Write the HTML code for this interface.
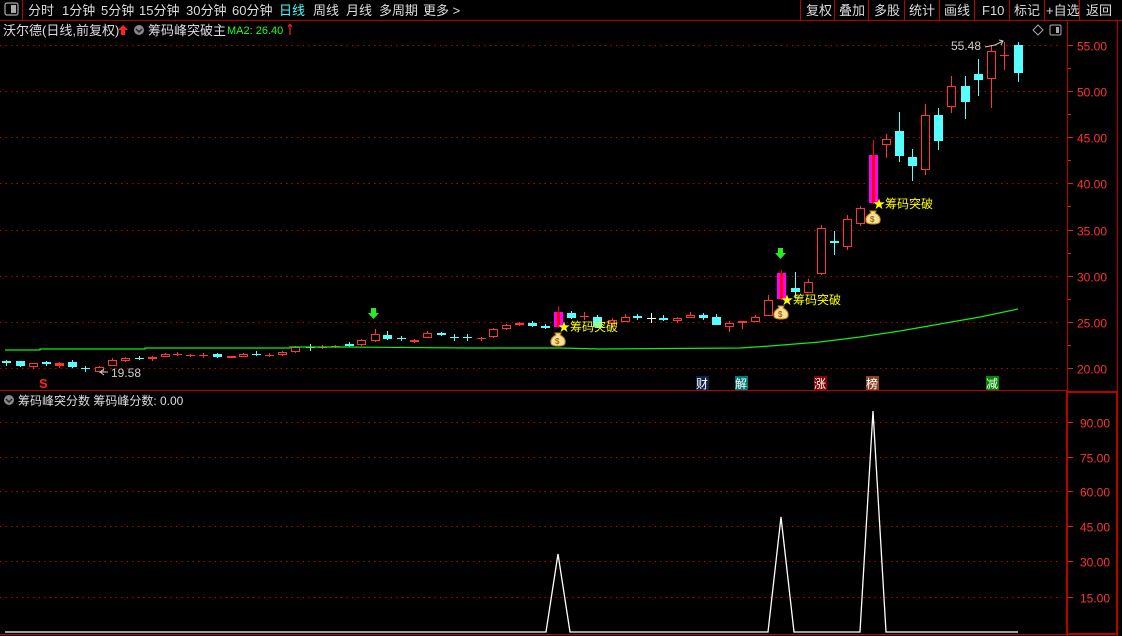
<!DOCTYPE html>
<html><head><meta charset="utf-8"><style>
body{margin:0;background:#000;width:1122px;height:636px;overflow:hidden;font-family:"Liberation Sans","Noto Sans CJK SC",sans-serif;}
svg{position:absolute;left:0;top:0}
text{font-family:"Liberation Sans","Noto Sans CJK SC",sans-serif}
#c,#grid{shape-rendering:crispEdges}
</style></head><body>
<svg id="s" width="1122" height="636" viewBox="0 0 1122 636" xmlns="http://www.w3.org/2000/svg">
<rect width="1122" height="636" fill="#000"/>
<line x1="0" y1="20.5" x2="1122" y2="20.5" stroke="#b00" stroke-width="1"/>
<line x1="22.5" y1="0" x2="22.5" y2="20" stroke="#b00"/>
<rect x="5" y="3" width="13" height="12" rx="2" fill="none" stroke="#aaa" stroke-width="1.2"/>
<rect x="11" y="5" width="5" height="8" fill="#aaa"/>
<g font-size="13" fill="#ddd">
<text x="28" y="15">分时</text><text x="62" y="15">1分钟</text><text x="101" y="15">5分钟</text><text x="139" y="15">15分钟</text><text x="186" y="15">30分钟</text><text x="232" y="15">60分钟</text>
<text x="279" y="15" fill="#4ff">日线</text><text x="313" y="15">周线</text><text x="346" y="15">月线</text><text x="379" y="15">多周期</text><text x="423" y="15">更多 &gt;</text>
</g>
<g stroke="#b00"><line x1="800.5" y1="0" x2="800.5" y2="20"/><line x1="834.5" y1="0" x2="834.5" y2="20"/><line x1="868.5" y1="0" x2="868.5" y2="20"/><line x1="904.5" y1="0" x2="904.5" y2="20"/><line x1="939.5" y1="0" x2="939.5" y2="20"/><line x1="974.5" y1="0" x2="974.5" y2="20"/><line x1="1009.5" y1="0" x2="1009.5" y2="20"/><line x1="1044.5" y1="0" x2="1044.5" y2="20"/><line x1="1079.5" y1="0" x2="1079.5" y2="20"/></g>
<g font-size="13" fill="#ddd"><text x="806" y="15">复权</text><text x="839" y="15">叠加</text><text x="874" y="15">多股</text><text x="909" y="15">统计</text><text x="944" y="15">画线</text><text x="982" y="15">F10</text><text x="1014" y="15">标记</text><text x="1046" y="15">+自选</text><text x="1086" y="15">返回</text></g>
<text x="3" y="35" font-size="13" fill="#ddd">沃尔德(日线,前复权)</text>
<path d="M123 25 L128 30 L125 30 L125 35 L121 35 L121 30 L118 30 Z" fill="#f22"/>
<circle cx="139" cy="30" r="5" fill="#888"/><path d="M136 29 L139 32 L142 29" stroke="#222" stroke-width="1.5" fill="none"/>
<text x="148" y="35" font-size="13" fill="#ddd">筹码峰突破主</text>
<text x="227" y="34" font-size="11" fill="#2f2">MA2: 26.40</text>
<line x1="290" y1="25" x2="290" y2="35" stroke="#f22" stroke-width="1.2"/><path d="M288 27 L290 24 L292 27" stroke="#f22" fill="none"/>
<path d="M1038 25 L1043 30 L1038 35 L1033 30 Z" fill="none" stroke="#aaa"/>
<rect x="1050" y="25" width="11" height="10" rx="1.5" fill="none" stroke="#aaa"/><rect x="1056" y="27" width="3" height="6" fill="#aaa"/>
<line x1="1067.5" y1="21" x2="1067.5" y2="636" stroke="#b00"/>
<line x1="1117.5" y1="21" x2="1117.5" y2="636" stroke="#b00"/>
<line x1="0" y1="390.5" x2="1067" y2="390.5" stroke="#b00"/>
<rect x="1067" y="392" width="50" height="242" fill="none" stroke="#b00" stroke-width="2"/>
<line x1="0" y1="634.5" x2="1067" y2="634.5" stroke="#b00"/>
<g id="grid"></g>
<g id="c"></g>
<path d="M5 350 L40 350 L40 349 L145 349 L145 348 L290 348 L290 347 L345 347 L470 348 L560 348 L600 349 L740 348 L770 346 L820 342 L860 337 L900 331 L940 324 L980 317 L1018 309" stroke="#1e1" stroke-width="1.2" fill="none"/>
<text x="951" y="50" font-size="12" fill="#ccc">55.48</text>
<path d="M985 47 L995 45 L1003 41 M999 40 L1003 41 L1001 45" stroke="#ccc" fill="none"/>
<line x1="101" y1="372" x2="108" y2="372" stroke="#ccc"/><path d="M100 372 L104 369 M100 372 L104 375" stroke="#ccc"/>
<text x="111" y="377" font-size="12" fill="#ccc">19.58</text>
<path d="M371 308 h5 v5 h3 l-5.5 6 l-5.5 -6 h3z" fill="#2e2"/>
<path d="M778 248 h5 v5 h3 l-5.5 6 l-5.5 -6 h3z" fill="#2e2"/>
<g font-size="12" fill="#ff0"><text x="558" y="331">★筹码突破</text><text x="781" y="304">★筹码突破</text><text x="873" y="208">★筹码突破</text></g>
<g id="bags"></g>
<text x="39" y="388" font-size="13" fill="#f22" font-weight="bold">S</text>
<g font-size="12" fill="#fff">
<rect x="696" y="376" width="13" height="14" fill="#124"/><text x="696" y="388">财</text>
<rect x="735" y="376" width="13" height="14" fill="#077"/><text x="735" y="388">解</text>
<rect x="814" y="376" width="13" height="14" fill="#800"/><text x="814" y="388">涨</text>
<rect x="866" y="376" width="13" height="14" fill="#842"/><text x="866" y="388">榜</text>
<rect x="986" y="376" width="13" height="14" fill="#080"/><text x="986" y="388">减</text>
</g>
<circle cx="9" cy="400" r="5" fill="#888"/><path d="M6 399 L9 402 L12 399" stroke="#222" stroke-width="1.5" fill="none"/>
<text x="18" y="405" font-size="12" fill="#ddd">筹码峰突分数  筹码峰分数: 0.00</text>
<path d="M5 632 L546 632 L558 554 L570 632 L768 632 L781 517 L794 632 L860 632 L873 411 L886 632 L1018 632" stroke="#fff" stroke-width="1.3" fill="none"/>
<g id="ax"></g>
</svg>
<script>
var ns="http://www.w3.org/2000/svg";
function el(p,t,a,txt){var e=document.createElementNS(ns,t);for(var k in a)e.setAttribute(k,a[k]);if(txt)e.textContent=txt;document.getElementById(p).appendChild(e);return e;}
var ups=[55,50,45,40,35,30,25,20];
ups.forEach(function(v){var y=45+(55-v)*9.229;y=Math.round(y)+0.5;
el('grid','line',{x1:0,y1:y,x2:1060,y2:y,stroke:'#b00','stroke-dasharray':'1.5 4'});
el('grid','line',{x1:1068,y1:y,x2:1073,y2:y,stroke:'#d22'});
el('ax','text',{x:1077,y:y+5,'font-size':12,fill:'#f33'},v.toFixed(2));
var m=y+23;if(v>20)el('grid','line',{x1:1068,y1:m,x2:1071,y2:m,stroke:'#d22'});});
[[90,422],[75,457],[60,491],[45,526],[30,561],[15,597]].forEach(function(a){var y=a[1]+0.5;
el('grid','line',{x1:0,y1:y,x2:1062,y2:y,stroke:'#b00','stroke-dasharray':'1.5 4'});
el('grid','line',{x1:1068,y1:y,x2:1073,y2:y,stroke:'#d22'});
el('ax','text',{x:1080,y:y+5,'font-size':12,fill:'#f33'},a[0].toFixed(2));});
var C=[[6,361,363,360,366,'c'],[20,361,366,361,367,'c'],[33,363,367,363,369,'r'],[46,362,364,361,366,'c'],[59,363,366,362,368,'R'],[72,362,367,360,368,'c'],[85,368,369,366,372,'c'],[99,367,372,366,373,'r'],
[112,360,366,358,366,'r'],[125,358,361,357,362,'r'],[139,358,359,356,360,'c'],[152,357,359,356,361,'r'],[165,354,357,353,357,'r'],[177,354,355,352,356,'r'],[190,355,356,354,357,'r'],[203,355,356,353,358,'r'],[217,354,357,353,358,'c'],[231,356,358,356,358,'R'],[243,354,357,353,357,'r'],[256,354,355,351,356,'c'],[269,355,356,353,357,'r'],[282,352,355,351,356,'r'],[295,347,352,346,353,'r'],[310,347,348,344,351,'c'],[322,347,348,345,349,'r'],[335,346,347,345,348,'r'],[349,344,346,342,347,'c'],[361,340,345,339,346,'r'],[375,334,341,329,342,'r'],
[387,335,339,331,340,'c'],[401,338,339,336,341,'c'],[414,340,342,339,343,'R'],[427,333,338,331,338,'r'],[441,333,335,332,336,'c'],[454,337,338,334,341,'c'],[467,337,338,334,341,'c'],[481,338,339,337,341,'r'],[493,329,337,328,338,'r'],[506,325,329,324,330,'r'],[519,323,325,322,326,'r'],[532,323,326,321,327,'c'],[545,326,328,324,329,'c'],[558,312,327,306,328,'m'],[571,313,318,311,319,'c'],[584,316,317,312,320,'r'],[597,317,327,315,328,'c'],[612,320,324,318,326,'r'],[625,317,322,314,322,'r'],[637,316,318,314,320,'c'],[651,318,319,313,323,'w'],[663,318,320,315,321,'c'],[677,318,321,317,323,'r'],[690,315,318,312,318,'r'],[703,315,318,313,320,'c'],[716,317,325,314,325,'c'],[729,323,327,321,332,'r'],[742,321,323,321,329,'r'],[755,317,322,315,322,'r'],[768,300,316,295,316,'r'],[781,273,299,270,300,'m'],[795,288,292,272,298,'c'],[808,282,293,279,293,'r'],[821,228,274,225,275,'r'],[834,241,243,231,255,'c'],[847,219,247,215,250,'r'],[860,208,224,206,226,'r'],[873,155,203,140,204,'m'],[886,139,145,134,158,'r'],[899,131,156,112,162,'c'],[912,157,166,149,181,'c'],[925,115,170,104,175,'r'],[938,115,141,108,150,'c'],[951,86,107,76,113,'r'],[965,86,102,76,119,'c'],[978,74,80,59,96,'c'],[991,51,79,45,108,'r'],[1004,55,56,42,70,'r'],[1018,45,73,42,82,'c']];
C.forEach(function(d){var x=d[0],t=d[1],b=d[2],col=d[5];
var s=col=='c'?'#5ff':col=='w'?'#fff':col=='m'?'#f00':'#f33';
el('c','line',{x1:x+0.5,y1:d[3],x2:x+0.5,y2:d[4],stroke:s});
var h=Math.max(b-t,1);
if(col=='m'){el('c','rect',{x:x-4,y:t,width:9,height:h,fill:'#f0f'});el('c','rect',{x:x-1,y:t,width:3,height:h,fill:'#f00'});}
else if(col=='r'){ if(h<=1)el('c','line',{x1:x-4,y1:t+0.5,x2:x+5,y2:t+0.5,stroke:s}); else el('c','rect',{x:x-3.5,y:t+0.5,width:8,height:h-1,fill:'#000',stroke:s,'stroke-width':1.2});}
else if(col=='R'){el('c','rect',{x:x-4,y:t,width:9,height:h,fill:s});}
else { if(h<=1)el('c','line',{x1:x-4,y1:t+0.5,x2:x+5,y2:t+0.5,stroke:s}); else el('c','rect',{x:x-4,y:t,width:9,height:h,fill:s});}
});
[[558,339],[781,312],[873,217]].forEach(function(p){var x=p[0],y=p[1];
el('bags','path',{d:'M'+(x-3)+' '+(y-6)+' h6 l-1 2 q6 3 5 8 q0 3 -7 3 q-7 0 -7 -3 q-1 -5 5 -8z',fill:'#f2e0a0',stroke:'#c80','stroke-width':1});
el('bags','text',{x:x-3,y:y+5,'font-size':8,fill:'#a60','font-weight':'bold'},'$');});
</script>
</body></html>
